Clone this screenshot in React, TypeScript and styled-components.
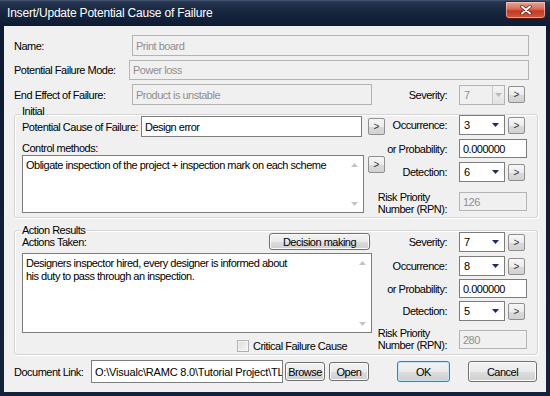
import styled, { createGlobalStyle } from 'styled-components'

const GlobalStyle = createGlobalStyle`
  html, body {
    margin: 0;
    padding: 0;
    background: #0c1a31;
  }
  body {
    font-family: 'Liberation Sans', Arial, sans-serif;
  }
`

const Window = styled.div`
  width: 550px;
  height: 396px;
  box-sizing: border-box;
  padding: 0 4px 4px 4px;
  display: flex;
  flex-direction: column;
  overflow: hidden;
  background: linear-gradient(
    to bottom,
    #4a5a76 0px,
    #24344f 2px,
    #17263f 12px,
    #0d1b32 26px,
    #13223b 100%
  );
`

const TitleBar = styled.div`
  height: 26px;
  flex: none;
  display: flex;
  align-items: flex-start;
  justify-content: space-between;
  padding-left: 3px;
`

const Title = styled.span`
  color: #fff;
  font-size: 12px;
  line-height: 26px;
  letter-spacing: -0.2px;
  white-space: nowrap;
`

const CloseButton = styled.div`
  width: 41px;
  height: 18px;
  margin-top: 1px;
  box-sizing: border-box;
  border: 1px solid #5a1a12;
  border-radius: 0 0 4px 4px;
  box-shadow: inset 0 0 0 1px rgba(255, 220, 210, 0.55);
  background: linear-gradient(to bottom, #e7a597 0%, #d86a55 45%, #c33a22 55%, #d0573d 100%);
  display: flex;
  align-items: center;
  justify-content: center;
`

const Body = styled.div`
  flex: 1;
  background: #f0f0f0;
  padding: 9px 8px 0 10px;
  display: flex;
  flex-direction: column;
  font-size: 11px;
  letter-spacing: -0.5px;
  color: #000;
`

const Row = styled.div<{ $h: number; $mt?: number }>`
  display: flex;
  align-items: center;
  height: ${p => p.$h}px;
  margin-top: ${p => p.$mt ?? 0}px;
  flex: none;
`

const Label = styled.span<{ $w?: number }>`
  ${p => (p.$w ? `width: ${p.$w}px;` : '')}
  flex: none;
  white-space: nowrap;
  line-height: 12px;
`

const TextField = styled.div<{ $w: number; $h: number; $disabled?: boolean; $spacing?: number }>`
  width: ${p => p.$w}px;
  height: ${p => p.$h}px;
  flex: none;
  box-sizing: border-box;
  border: 1px solid ${p => (p.$disabled ? '#b4b4b4' : '#7d7d7d')};
  background: ${p => (p.$disabled ? '#f0f0f0' : '#fff')};
  color: ${p => (p.$disabled ? '#8f8f8f' : '#000')};
  padding-left: 3px;
  display: flex;
  align-items: center;
  overflow: hidden;
  white-space: nowrap;
  ${p => (p.$spacing !== undefined ? `letter-spacing: ${p.$spacing}px;` : '')}
`

const ComboBox = styled.div<{ $disabled?: boolean }>`
  width: 46px;
  height: 20px;
  flex: none;
  box-sizing: border-box;
  border: 1px solid ${p => (p.$disabled ? '#b4b4b4' : '#7d7d7d')};
  background: ${p => (p.$disabled ? '#f0f0f0' : '#fff')};
  color: ${p => (p.$disabled ? '#8f8f8f' : '#000')};
  display: flex;
  align-items: center;
  justify-content: space-between;
  padding-left: 4px;
  padding-right: ${p => (p.$disabled ? 0 : 5)}px;
`

const DropButton = styled.div`
  width: 12px;
  height: 18px;
  box-sizing: border-box;
  border-left: 1px solid #c8c8c8;
  background: linear-gradient(to bottom, #f4f4f4, #e2e2e2);
  display: flex;
  align-items: center;
  justify-content: center;
`

const SmallButton = styled.div<{ $ml?: number; $mt?: number; $center?: boolean }>`
  width: 17px;
  height: 17px;
  flex: none;
  margin-left: ${p => p.$ml ?? 0}px;
  margin-top: ${p => p.$mt ?? 0}px;
  align-self: ${p => (p.$center ? 'center' : 'flex-start')};
  box-sizing: border-box;
  border: 1px solid #8f8f8f;
  border-radius: 2px;
  background: linear-gradient(to bottom, #f7f7f7 0%, #ececec 50%, #dadada 51%, #d2d2d2 100%);
  color: #333;
  font-size: 10px;
  letter-spacing: 0;
  display: flex;
  align-items: center;
  justify-content: center;
`

const PushButton = styled.div<{ $w: number; $h: number; $ml?: number; $default?: boolean }>`
  width: ${p => p.$w}px;
  height: ${p => p.$h}px;
  flex: none;
  margin-left: ${p => p.$ml ?? 0}px;
  box-sizing: border-box;
  border: 1px solid ${p => (p.$default ? '#3c7fb1' : '#707070')};
  border-radius: 3px;
  box-shadow: inset 0 0 0 1px ${p => (p.$default ? '#bfe7f9' : '#fcfcfc')};
  background: linear-gradient(to bottom, #f2f2f2 0%, #ebebeb 50%, #dddddd 51%, #cfcfcf 100%);
  display: flex;
  align-items: center;
  justify-content: center;
  white-space: nowrap;
`

const GroupBox = styled.div<{ $h: number; $mt: number }>`
  position: relative;
  height: ${p => p.$h}px;
  margin-top: ${p => p.$mt}px;
  flex: none;
  box-sizing: border-box;
  border: 1px solid #d5d5d5;
  border-radius: 3px;
  box-shadow: inset 1px 1px 0 #fff, 1px 1px 0 #fff;
  padding: 0 10px 0 7px;
  display: flex;
`

const Legend = styled.span<{ $top: number }>`
  position: absolute;
  left: 6px;
  top: ${p => p.$top}px;
  padding: 0 1px;
  background: #f0f0f0;
  line-height: 12px;
  white-space: nowrap;
`

const LeftPane = styled.div`
  width: 363px;
  flex: none;
  display: flex;
  flex-direction: column;
`

const RightPane = styled.div<{ $pr?: number }>`
  flex: 1;
  min-width: 0;
  padding-right: ${p => p.$pr ?? 0}px;
  display: flex;
  flex-direction: column;
`

const PickerRow = styled.div<{ $h: number; $mt?: number; $wide?: boolean }>`
  display: flex;
  justify-content: flex-end;
  align-items: ${p => (p.$wide ? 'flex-start' : 'center')};
  height: ${p => p.$h}px;
  margin-top: ${p => p.$mt ?? 0}px;
  margin-left: ${p => (p.$wide ? -12 : 0)}px;
  flex: none;
`

const RightLabel = styled.span`
  margin-right: 12px;
  flex: none;
  white-space: nowrap;
  line-height: 12px;
`

const Controls = styled.div`
  width: 68px;
  flex: none;
  display: flex;
  align-items: center;
`

const TextArea = styled.div<{ $w: number; $h: number; $mt?: number }>`
  width: ${p => p.$w}px;
  height: ${p => p.$h}px;
  margin-top: ${p => p.$mt ?? 0}px;
  flex: none;
  box-sizing: border-box;
  border: 1px solid #7d7d7d;
  background: #fff;
  display: flex;
`

const TextContent = styled.div`
  flex: 1;
  padding: 3px 3px;
  line-height: 13px;
  white-space: pre;
  overflow: hidden;
`

const ScrollStrip = styled.div`
  width: 17px;
  flex: none;
  display: flex;
  flex-direction: column;
  align-items: center;
  justify-content: space-between;
  padding: 7px 0 6px;
`

const Checkbox = styled.div`
  width: 12px;
  height: 12px;
  box-sizing: border-box;
  border: 1px solid #b1b1b1;
  background: linear-gradient(135deg, #dcdcdc, #f6f6f6);
  box-shadow: inset 0 0 0 1px #f4f4f4;
  flex: none;
  margin-right: 4px;
`

const Arrow = ({ color = '#1b2a6b', up = false }: { color?: string; up?: boolean }) => (
  <svg width="7" height="4" viewBox="0 0 7 4">
    <path d={up ? 'M0 4h7L3.5 0z' : 'M0 0h7L3.5 4z'} fill={color} />
  </svg>
)

const Combo = ({ value, disabled }: { value: string; disabled?: boolean }) => (
  <ComboBox $disabled={disabled}>
    <span>{value}</span>
    {disabled ? (
      <DropButton>
        <Arrow color="#b9b9b9" />
      </DropButton>
    ) : (
      <Arrow />
    )}
  </ComboBox>
)

const Picker = ({ label, value, disabled, mt }: { label: string; value: string; disabled?: boolean; mt?: number }) => (
  <PickerRow $h={20} $mt={mt}>
    <RightLabel>{label}</RightLabel>
    <Controls>
      <Combo value={value} disabled={disabled} />
      <SmallButton $ml={3} $center>&gt;</SmallButton>
    </Controls>
  </PickerRow>
)

const Probability = ({ mt }: { mt?: number }) => (
  <PickerRow $h={19} $mt={mt}>
    <RightLabel>or Probability:</RightLabel>
    <TextField $w={68} $h={19}>0.000000</TextField>
  </PickerRow>
)

const Rpn = ({ value, mt, inputMt }: { value: string; mt: number; inputMt: number }) => (
  <PickerRow $h={24} $mt={mt} $wide>
    <RightLabel>
      Risk Priority
      <br />
      Number (RPN):
    </RightLabel>
    <TextField $w={68} $h={19} $disabled style={{ marginTop: inputMt }}>
      {value}
    </TextField>
  </PickerRow>
)

const Scroll = () => (
  <ScrollStrip>
    <Arrow color="#c4c4c4" up />
    <Arrow color="#c4c4c4" />
  </ScrollStrip>
)

export default function App() {
  return (
    <>
      <GlobalStyle />
      <Window>
        <TitleBar>
          <Title>Insert/Update Potential Cause of Failure</Title>
          <CloseButton>
            <svg width="12" height="10" viewBox="0 0 12 10">
              <path d="M2 1.5 L10 8.5 M10 1.5 L2 8.5" stroke="#5a1a12" strokeWidth="3.4" strokeLinecap="round" />
              <path d="M2 1.5 L10 8.5 M10 1.5 L2 8.5" stroke="#fff" strokeWidth="2" strokeLinecap="round" />
            </svg>
          </CloseButton>
        </TitleBar>

        <Body>
          <Row $h={21}>
            <Label $w={118}>Name:</Label>
            <TextField $w={397} $h={21} $disabled>Print board</TextField>
          </Row>
          <Row $h={20} $mt={4}>
            <Label $w={115}>Potential Failure Mode:</Label>
            <TextField $w={400} $h={20} $disabled>Power loss</TextField>
          </Row>
          <Row $h={21} $mt={4}>
            <Label $w={118}>End Effect of Failure:</Label>
            <TextField $w={240} $h={21} $disabled>Product is unstable</TextField>
            <RightPane $pr={11}>
              <Picker label="Severity:" value="7" disabled />
            </RightPane>
          </Row>

          <GroupBox $h={104} $mt={9}>
            <Legend $top={-10}>Initial</Legend>
            <LeftPane>
              <Row $h={21} $mt={1}>
                <Label $w={119}>Potential Cause of Failure:</Label>
                <TextField $w={221} $h={21}>Design error</TextField>
                <SmallButton $ml={6} $center>&gt;</SmallButton>
              </Row>
              <Label style={{ marginTop: 5 }}>Control methods:</Label>
              <Row $h={58} $mt={1} style={{ alignItems: 'flex-start' }}>
                <TextArea $w={342} $h={58}>
                  <TextContent>Obligate inspection of the project + inspection mark on each scheme</TextContent>
                  <Scroll />
                </TextArea>
                <SmallButton $ml={4} $mt={1}>&gt;</SmallButton>
              </Row>
            </LeftPane>
            <RightPane>
              <Picker label="Occurrence:" value="3" />
              <Probability mt={4} />
              <Picker label="Detection:" value="6" mt={4} />
              <Rpn value="126" mt={9} inputMt={1} />
            </RightPane>
          </GroupBox>

          <GroupBox $h={125} $mt={12}>
            <Legend $top={-7}>Action Results</Legend>
            <LeftPane>
              <Row $h={17} $mt={2} style={{ width: 348, justifyContent: 'space-between' }}>
                <Label>Actions Taken:</Label>
                <PushButton $w={101} $h={17}>Decision making</PushButton>
              </Row>
              <TextArea $w={350} $h={80} $mt={3}>
                <TextContent>
                  {'Designers inspector hired, every designer is informed about\nhis duty to pass through an inspection.'}
                </TextContent>
                <Scroll />
              </TextArea>
              <Row $h={12} $mt={7} style={{ paddingLeft: 215 }}>
                <Checkbox />
                <Label>Critical Failure Cause</Label>
              </Row>
            </LeftPane>
            <RightPane>
              <Picker label="Severity:" value="7" mt={1} />
              <Picker label="Occurrence:" value="8" mt={4} />
              <Probability mt={3} />
              <Picker label="Detection:" value="5" mt={3} />
              <Rpn value="280" mt={6} inputMt={3} />
            </RightPane>
          </GroupBox>

          <Row $h={23} $mt={5}>
            <Label $w={77}>Document Link:</Label>
            <TextField $w={192} $h={23} $spacing={-0.2}>O:\Visualc\RAMC 8.0\Tutorial Project\TL</TextField>
            <PushButton $w={40} $h={19} $ml={2}>Browse</PushButton>
            <PushButton $w={40} $h={19} $ml={4}>Open</PushButton>
            <PushButton $w={53} $h={21} $ml={28} $default>OK</PushButton>
            <PushButton $w={69} $h={21} $ml={18}>Cancel</PushButton>
          </Row>
        </Body>
      </Window>
    </>
  )
}
